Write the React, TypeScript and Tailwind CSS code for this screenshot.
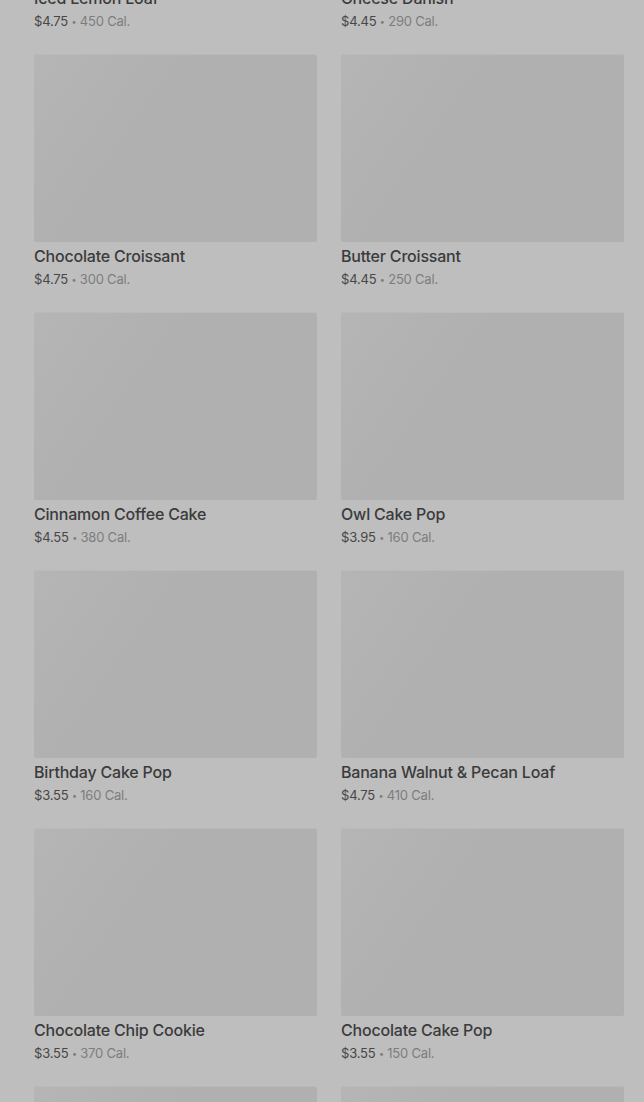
import React from "react";

type Item = { name: string; price: string; cal: string };

const items: Item[] = [
  { name: "Iced Lemon Loaf", price: "$4.75", cal: "450 Cal." },
  { name: "Cheese Danish", price: "$4.45", cal: "290 Cal." },
  { name: "Chocolate Croissant", price: "$4.75", cal: "300 Cal." },
  { name: "Butter Croissant", price: "$4.45", cal: "250 Cal." },
  { name: "Cinnamon Coffee Cake", price: "$4.55", cal: "380 Cal." },
  { name: "Owl Cake Pop", price: "$3.95", cal: "160 Cal." },
  { name: "Birthday Cake Pop", price: "$3.55", cal: "160 Cal." },
  { name: "Banana Walnut & Pecan Loaf", price: "$4.75", cal: "410 Cal." },
  { name: "Chocolate Chip Cookie", price: "$3.55", cal: "370 Cal." },
  { name: "Chocolate Cake Pop", price: "$3.55", cal: "150 Cal." },
];

function Img() {
  return (
    <div className="h-[188px] w-full rounded-[2px] bg-[linear-gradient(125deg,#b5b5b5_0%,#b2b2b2_22%,#b0b0b0_40%,#b0b0b0_100%)] border-t border-[#b9b9b9]" />
  );
}

function Card({ item }: { item: Item }) {
  return (
    <div className="flex flex-col">
      <Img />
      <div className="mt-[4px] h-[20px] text-[16px] leading-[20px] font-medium text-[#3b3b3b] tracking-[-0.2px] whitespace-nowrap">
        {item.name}
      </div>
      <div className="mt-[4px] h-[18px] text-[13px] leading-[18px] tracking-[-0.2px] whitespace-nowrap">
        <span className="text-[#474747]">{item.price}</span>
        <span className="text-[#7d7d7d]">
          {" "}
          <span className="text-[9px] align-[1px]">•</span> {item.cal}
        </span>
      </div>
    </div>
  );
}

export default function App() {
  return (
    <div
      className="h-[1102px] w-full overflow-hidden bg-[#bebebe]"
      style={{ fontFamily: "Inter, 'Noto Sans', Arial, sans-serif" }}
    >
      <div className="-mt-[204px] grid grid-cols-2 gap-x-[24px] gap-y-[24px] pl-[34px] pr-[20px]">
        {items.map((it, i) => (
          <Card key={i} item={it} />
        ))}
        <div className="flex flex-col">
          <Img />
        </div>
        <div className="flex flex-col">
          <Img />
        </div>
      </div>
    </div>
  );
}
